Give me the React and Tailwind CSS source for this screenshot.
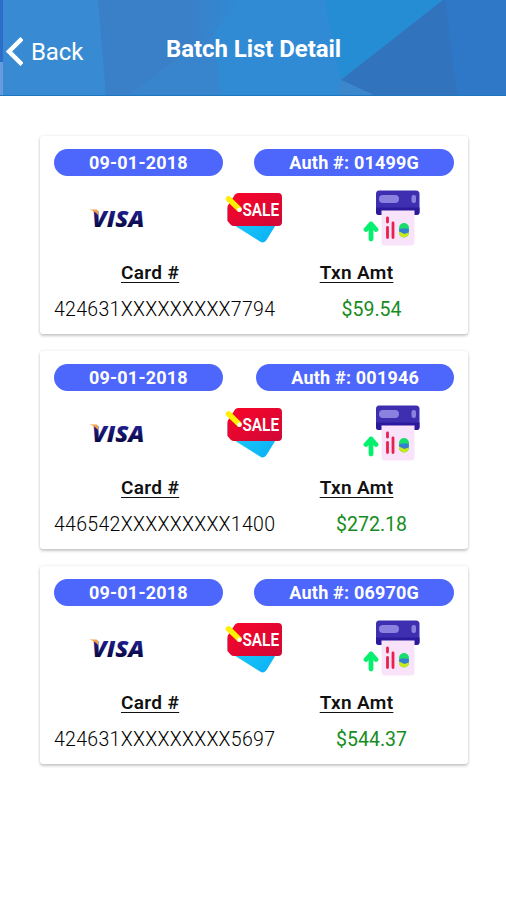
const TRANSACTIONS = [
  { date: '09-01-2018', auth: '01499G', card: '424631XXXXXXXXX7794', amount: '$59.54' },
  { date: '09-01-2018', auth: '001946', card: '446542XXXXXXXXX1400', amount: '$272.18' },
  { date: '09-01-2018', auth: '06970G', card: '424631XXXXXXXXX5697', amount: '$544.37' },
]

const VisaLogo = () => (
  <svg viewBox="0 0 57 57" className="h-[57px] w-[57px]" role="img" aria-label="Visa">
    <defs>
      <linearGradient id="visa-blue" x1="0" y1="0" x2="0" y2="1">
        <stop offset="20%" stopColor="#22229a" />
        <stop offset="85%" stopColor="#06063c" />
      </linearGradient>
    </defs>
    <text x="3" y="36.500" textLength="52.500" lengthAdjust="spacingAndGlyphs" fill="url(#visa-blue)"
      className="font-['Open_Sans',sans-serif] text-[22.5px] font-extrabold italic">
      VISA
    </text>
    <path d="M0 19.500h6.500c1.500 0 2.300.6 2.500 2l.8 5C8 23 5 20.700 0 19.500z" fill="#f2a04c" />
  </svg>
)

const SaleTag = () => (
  <svg viewBox="0 0 57 57" className="h-[57px] w-[57px] overflow-visible" role="img" aria-label="Sale">
    <defs>
      <linearGradient id="sale-cyan" x1="0" y1="0" x2="1" y2="1">
        <stop offset="0%" stopColor="#22d4fa" />
        <stop offset="100%" stopColor="#0aaef5" />
      </linearGradient>
      <linearGradient id="sale-red" x1="0" y1="0" x2="1" y2="1">
        <stop offset="0%" stopColor="#fa0528" />
        <stop offset="100%" stopColor="#cf0838" />
      </linearGradient>
    </defs>
    <path d="M1.500 18v11q0 2 1.500 3L34 51.500q4 2.500 6.500-1.500L51 33 30 14z" fill="url(#sale-cyan)" />
    <path d="M12 3h40q4 0 4 4v25q0 4-4 4H8q-2 0-3.500-1.500L1.500 31V17q0-2 1.500-3l6-9.500Q10.200 3 12 3z" fill="url(#sale-red)" />
    <path d="M2.500 8.800L13 19" stroke="#fdf000" strokeWidth="5.500" strokeLinecap="round" />
    <circle cx="13.500" cy="19.700" r="2.200" fill="#fff" />
    <text x="0" y="0" transform="translate(16.5 26) scale(0.83 1)" fill="#fff"
      className="font-[Roboto,sans-serif] text-[18.5px] font-semibold">
      SALE
    </text>
  </svg>
)

const ReceiptPrinter = () => (
  <svg viewBox="0 0 57 57" className="h-[57px] w-[57px]" role="img" aria-label="Receipt">
    <path d="M16 .5h37q3.500 0 3.500 3.500v18q0 3-3 3H16q-3 0-3-3V4Q13 .5 16 .5z" fill="#3d2fb0" />
    <path d="M13 17.500h43.500V22q0 3-3 3H16q-3 0-3-3z" fill="#2c1a9d" />
    <rect x="16" y="5" width="20" height="8" rx="4" fill="#8b82e0" />
    <rect x="48.500" y="5" width="4.500" height="8" rx="2" fill="#8b82e0" />
    <path d="M18.500 20.500h33V52q0 3.500-3.500 3.500H22q-3.500 0-3.500-3.500z" fill="#f9e3fb" />
    <path d="M24.500 28v4M24.500 37.500v10M30 33v14.500" stroke="#e8204c" strokeWidth="2.800" strokeLinecap="round" />
    <rect x="36" y="33" width="10" height="14.500" rx="5" fill="#16dd6c" />
    <path d="M36 41.500h10v1a5 5 0 0 1-10 0z" fill="#c9ea18" />
    <path d="M36.200 39.500l2.300-1h6l1.300 1v3l-4.500 1.500-5.100-2.500z" fill="#347fd0" />
    <path d="M8 49V34M3 39.500L8 34l5 5.500" fill="none" stroke="#06f06f" strokeWidth="4.800"
      strokeLinecap="round" strokeLinejoin="round" />
  </svg>
)

const Pill = ({ children }) => (
  <span className="h-[27px] rounded-full bg-[#4d66fb] px-[35px] text-center text-[18px] leading-[28px] font-bold tracking-[0.2px] text-white">
    {children}
  </span>
)

const TransactionCard = ({ date, auth, card, amount }) => (
  <article className="h-[198px] rounded-[3px] bg-white px-[14px] pt-[13.5px] shadow-[0_2px_3px_rgba(0,0,0,0.2),0_0_3px_rgba(0,0,0,0.1)]">
    <div className="flex justify-between">
      <Pill>{date}</Pill>
      <Pill>Auth #: {auth}</Pill>
    </div>
    <div className="mt-[13.5px] flex gap-[80px] pl-[35px]">
      <VisaLogo />
      <SaleTag />
      <ReceiptPrinter />
    </div>
    <div className="mt-[12px] flex gap-[140.5px] pl-[67px] text-[19px] leading-[28px] font-semibold tracking-[0.35px] text-[#111]">
      <h2 className="underline decoration-1 underline-offset-[3px]">Card #</h2>
      <h2 className="underline decoration-1 underline-offset-[3px]">Txn Amt</h2>
    </div>
    <div className="mt-[10px] flex text-[19.5px] leading-[26px]">
      <p className="w-[236px] font-light tracking-[0.3px] text-[#000]">{card}</p>
      <p className="w-[163px] text-center text-[#168c22]">{amount}</p>
    </div>
  </article>
)

const HeaderBackdrop = () => (
  <svg viewBox="0 0 506 96" className="absolute inset-0 h-full w-full" preserveAspectRatio="none" aria-hidden="true">
    <defs>
      <linearGradient id="header-mid" x1="0" y1="0" x2="1" y2="0">
        <stop offset="0%" stopColor="#3980c8" />
        <stop offset="65%" stopColor="#3980c8" />
        <stop offset="100%" stopColor="#308ad4" />
      </linearGradient>
    </defs>
    <rect width="506" height="96" fill="#308ad4" />
    <path d="M0 0h98l8 96H0z" fill="#388bd2" />
    <path d="M98 0h142l-26 32-76 56-8 8h-24z" fill="url(#header-mid)" />
    <path d="M214 32l6 64h-90l8-8z" fill="#3985cd" />
    <path d="M325 0h118L341 80z" fill="#258dd3" />
    <path d="M443 0h63v96H376l-35-16z" fill="#3173bd" />
    <path d="M445 0h61v96h-49z" fill="#2f78c8" />
    <path d="M341 80l35 16h-38z" fill="#3c86cc" />
    <path d="M0 0h3v62H0z" fill="#2c6dcc" />
    <path d="M0 62h3v34H0z" fill="#669bdc" />
    <path d="M0 95.500h506" stroke="#1f76c0" />
  </svg>
)

const App = () => (
  <div className="h-[900px] w-[506px] overflow-hidden bg-white font-[Roboto,sans-serif]">
    <header className="relative h-24">
      <HeaderBackdrop />
      <div className="relative flex text-white">
        <button type="button" className="mt-[36px] flex h-[32px] w-[166px] items-center pl-[5px] text-[24px] tracking-[-0.1px]">
          <svg viewBox="0 0 18 32" className="mr-[8px] h-8 w-[18px]" fill="none" stroke="currentColor" strokeWidth="4.500">
            <path d="M17 2.500L4 15.500l13 13" />
          </svg>
          Back
        </button>
        <h1 className="mt-[33px] text-[24px] leading-[32px] font-bold tracking-[-0.06px]">Batch List Detail</h1>
      </div>
    </header>
    <main className="flex flex-col gap-[17px] pt-[39.5px] pr-[38px] pl-[40px]">
      {TRANSACTIONS.map((transaction) => (
        <TransactionCard key={transaction.auth} {...transaction} />
      ))}
    </main>
  </div>
)

export default App
